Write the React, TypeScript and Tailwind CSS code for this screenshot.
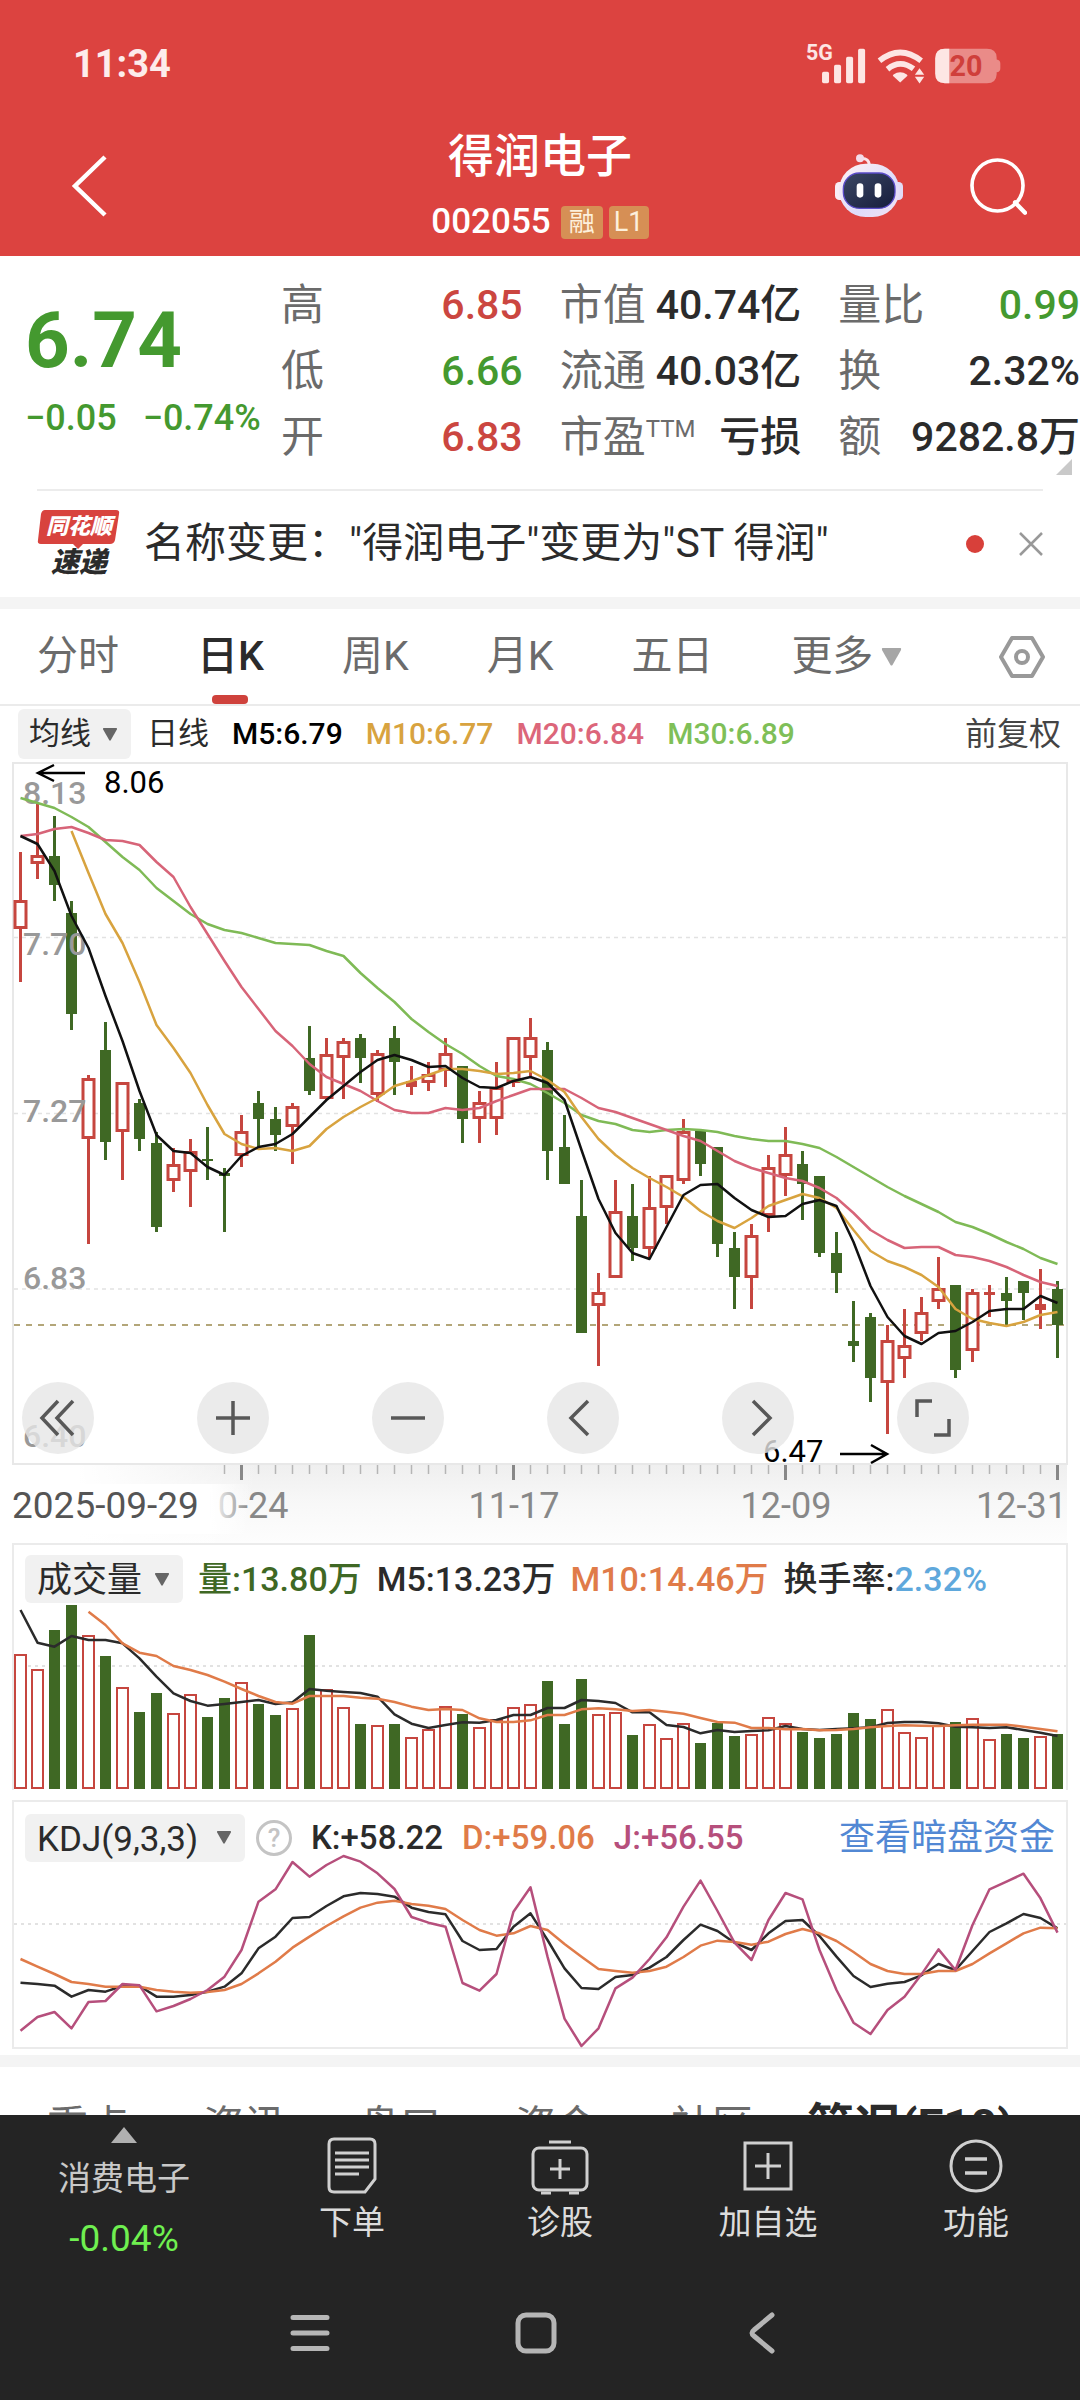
import React from "react";

type Candle = [up: number, high: number, low: number, top: number, bottom: number];

const STEP = 17;
const FIRST_X = 20.5;
const xAt = (i: number) => FIRST_X + i * STEP;

// up: 1 = hollow red, 0 = solid green, 2 = thin red body
const candles: Candle[] = [
  [1, 852, 982, 900, 929], [1, 802, 879, 855, 864], [0, 816, 901, 856, 885], [0, 901, 1030, 913, 1014],
  [1, 1075, 1244, 1078, 1139], [0, 1022, 1160, 1050, 1142], [1, 1082, 1180, 1082, 1132], [0, 1099, 1151, 1103, 1139],
  [0, 1132, 1232, 1143, 1227], [1, 1148, 1192, 1164, 1181], [1, 1139, 1207, 1151, 1172], [0, 1127, 1180, 1159, 1161],
  [0, 1168, 1232, 1173, 1176], [1, 1115, 1167, 1131, 1156], [0, 1091, 1147, 1103, 1119], [0, 1107, 1151, 1119, 1135],
  [1, 1103, 1164, 1106, 1127], [0, 1026, 1095, 1058, 1091], [1, 1038, 1100, 1054, 1099], [1, 1038, 1099, 1041, 1058],
  [0, 1034, 1083, 1038, 1058], [1, 1050, 1102, 1053, 1095], [0, 1026, 1095, 1038, 1062], [2, 1066, 1095, 1081, 1087],
  [1, 1062, 1091, 1074, 1083], [1, 1038, 1087, 1053, 1071], [0, 1066, 1143, 1066, 1119], [1, 1091, 1143, 1102, 1119],
  [1, 1062, 1135, 1087, 1119], [1, 1037, 1087, 1037, 1083], [1, 1018, 1078, 1037, 1058], [0, 1042, 1180, 1050, 1151],
  [0, 1115, 1184, 1147, 1184], [0, 1180, 1333, 1216, 1333], [1, 1273, 1366, 1292, 1306], [1, 1180, 1278, 1211, 1278],
  [0, 1184, 1261, 1216, 1248], [1, 1176, 1258, 1207, 1249], [1, 1175, 1224, 1175, 1208], [1, 1119, 1184, 1131, 1181],
  [0, 1131, 1176, 1131, 1164], [0, 1147, 1257, 1147, 1244], [0, 1232, 1309, 1248, 1277], [1, 1224, 1309, 1235, 1278],
  [1, 1155, 1232, 1167, 1216], [1, 1127, 1196, 1154, 1176], [0, 1151, 1220, 1164, 1184], [0, 1176, 1257, 1176, 1253],
  [0, 1232, 1293, 1253, 1273], [0, 1301, 1362, 1341, 1346], [0, 1313, 1402, 1317, 1378], [1, 1325, 1434, 1340, 1383],
  [1, 1309, 1378, 1345, 1359], [1, 1297, 1341, 1312, 1334], [1, 1257, 1309, 1288, 1302], [0, 1285, 1378, 1285, 1370],
  [1, 1289, 1362, 1292, 1351], [2, 1285, 1317, 1292, 1295], [0, 1277, 1325, 1293, 1301], [0, 1281, 1320, 1281, 1293],
  [2, 1269, 1329, 1304, 1310], [0, 1281, 1358, 1289, 1325],
];

const ma5 = [836, 844, 871, 916, 948, 996, 1041, 1091, 1135, 1151, 1153, 1167, 1175, 1156, 1147, 1144, 1134, 1117, 1100, 1086, 1072, 1060, 1055, 1060, 1067, 1066, 1078, 1087, 1088, 1081, 1077, 1083, 1100, 1150, 1199, 1233, 1253, 1259, 1227, 1195, 1185, 1184, 1198, 1210, 1217, 1216, 1204, 1200, 1206, 1242, 1286, 1317, 1336, 1344, 1333, 1331, 1322, 1311, 1309, 1309, 1296, 1303];
const ma10 = [831, 873, 914, 943, 982, 1025, 1048, 1073, 1105, 1134, 1144, 1149, 1148, 1151, 1146, 1129, 1117, 1107, 1098, 1086, 1081, 1075, 1069, 1069, 1071, 1074, 1073, 1071, 1080, 1092, 1117, 1139, 1155, 1168, 1178, 1187, 1197, 1211, 1221, 1228, 1218, 1206, 1200, 1194, 1198, 1208, 1230, 1251, 1261, 1267, 1275, 1287, 1309, 1319, 1323, 1326, 1322, 1315, 1312];
const ma20 = [836, 834, 829, 827, 833, 840, 841, 845, 862, 877, 907, 934, 961, 987, 1009, 1031, 1046, 1064, 1077, 1084, 1091, 1101, 1110, 1113, 1113, 1108, 1110, 1108, 1101, 1095, 1089, 1089, 1089, 1098, 1108, 1112, 1118, 1124, 1130, 1136, 1141, 1151, 1161, 1168, 1173, 1178, 1181, 1188, 1198, 1213, 1230, 1240, 1248, 1247, 1247, 1255, 1257, 1261, 1267, 1275, 1282, 1286];
const ma30 = [798, 803, 808, 817, 827, 842, 857, 870, 888, 901, 914, 924, 930, 933, 938, 943, 944, 945, 951, 956, 973, 988, 1002, 1019, 1032, 1044, 1054, 1066, 1076, 1079, 1084, 1093, 1103, 1115, 1121, 1124, 1130, 1132, 1130, 1129, 1130, 1132, 1136, 1139, 1141, 1141, 1144, 1148, 1157, 1167, 1177, 1187, 1196, 1204, 1212, 1222, 1227, 1234, 1242, 1249, 1258, 1264];

const volumes = [1655, 1670, 1630, 1605, 1636, 1656, 1688, 1712, 1693, 1714, 1695, 1717, 1698, 1683, 1704, 1715, 1709, 1635, 1690, 1708, 1724, 1726, 1724, 1738, 1730, 1707, 1714, 1728, 1720, 1708, 1705, 1681, 1724, 1679, 1715, 1713, 1735, 1725, 1739, 1724, 1743, 1723, 1736, 1735, 1718, 1724, 1732, 1738, 1734, 1713, 1719, 1710, 1733, 1738, 1726, 1722, 1719, 1740, 1734, 1738, 1737, 1734];
const vol5 = [210, 308, 320, 288, 300, 300, 310, 355, 410, 460, 483, 497, 492, 486, 480, 492, 487, 447, 452, 456, 459, 470, 523, 551, 564, 555, 547, 548, 540, 525, 525, 504, 504, 480, 483, 489, 517, 517, 555, 561, 580, 570, 576, 573, 571, 558, 567, 570, 567, 565, 562, 549, 546, 546, 550, 560, 562, 564, 562, 570, 578, 588];
const vol10 = [215, 255, 310, 338, 348, 378, 390, 405, 425, 447, 468, 486, 491, 468, 468, 468, 473, 476, 486, 500, 510, 507, 510, 535, 546, 546, 541, 525, 525, 508, 505, 508, 513, 510, 515, 521, 534, 546, 548, 564, 564, 568, 567, 571, 570, 567, 562, 558, 556, 557, 558, 556, 554, 554, 554, 560, 567, 574];

const kLine = [578, 582, 587, 620, 600, 605, 588, 588, 620, 620, 615, 605, 590, 550, 475, 440, 384, 381, 348, 319, 309, 312, 320, 353, 366, 373, 453, 480, 477, 410, 370, 450, 535, 594, 597, 561, 555, 533, 501, 450, 404, 423, 458, 480, 430, 393, 390, 438, 500, 558, 591, 581, 576, 556, 522, 540, 483, 426, 400, 372, 384, 415];
const dLine = [507, 530, 552, 576, 582, 590, 590, 590, 600, 605, 608, 606, 600, 582, 550, 515, 473, 440, 408, 379, 353, 338, 332, 342, 347, 357, 390, 420, 437, 430, 408, 420, 462, 500, 537, 543, 548, 543, 530, 501, 467, 452, 456, 464, 455, 432, 417, 430, 453, 486, 522, 543, 552, 552, 543, 543, 522, 490, 460, 430, 413, 415];
const jLine = [722, 681, 666, 715, 636, 633, 582, 586, 664, 648, 627, 600, 560, 480, 335, 298, 216, 260, 225, 198, 215, 250, 297, 381, 398, 410, 579, 602, 552, 365, 292, 500, 686, 768, 715, 595, 563, 507, 442, 350, 272, 363, 458, 510, 390, 309, 328, 480, 600, 698, 732, 660, 620, 553, 478, 540, 405, 298, 275, 251, 325, 428];

const volY = (v: number) => 1540 + v / 3;
const kdjY = (v: number) => 1790 + v / 3;

const RED = "#c6463f";
const GREEN = "#3f6824";

function Line({ data, color, start = 0, y = (v: number) => v, width = 2.5 }: { data: number[]; color: string; start?: number; y?: (v: number) => number; width?: number }) {
  return (
    <polyline
      points={data.map((v, i) => `${xAt(i + start)},${y(v)}`).join(" ")}
      fill="none"
      stroke={color}
      strokeWidth={width}
      strokeLinejoin="round"
    />
  );
}

function StatusIcons() {
  return (
    <svg viewBox="78 28 584 128" className="h-[43px] w-[195px]" role="img" aria-label="5G 信号, Wi-Fi, 电量 20%">
      <text x="78" y="81" fontSize="64" fontWeight="700" fill="#fde6e4" className="font-['Roboto']">5G</text>
      <g fill="#fde6e4">
        <rect x="126" y="117" width="21" height="34" rx="5" />
        <rect x="162" y="96" width="21" height="55" rx="5" />
        <rect x="198" y="72" width="21" height="79" rx="5" />
        <rect x="234" y="48" width="21" height="103" rx="5" />
        <path d="M340 125 Q360 112 380 125 L382 129 L360 149 L338 129 Z" />
        <path d="M418 106 l14 20 h-28 Z M418 152 l14 -20 h-28 Z" />
      </g>
      <g fill="none" stroke="#fde6e4" strokeWidth="17">
        <path d="M298 84 Q360 34 423 84" />
        <path d="M322 109 Q360 78 400 108" />
      </g>
      <path d="M494 48 H620 Q648 48 649 74 V80 Q660 82 660 92 V106 Q660 117 649 118 V124 Q648 151 620 151 H494 Q465 151 465 122 V77 Q465 48 494 48Z" fill="#ea8b88" />
      <path d="M507 48 H494 Q465 48 465 77 V122 Q465 151 494 151 H507 Z" fill="#fde6e4" />
      <text x="508" y="129" fontSize="86" fontWeight="700" fill="#cf3f3b" className="font-['Roboto']">20</text>
    </svg>
  );
}

function Robot() {
  return (
    <svg viewBox="165 370 210 198" className="h-[66px] w-[70px]" aria-hidden="true">
      <defs>
        <linearGradient id="shell" x1="0" y1="0" x2="1" y2="1">
          <stop offset="0" stopColor="#fff3f3" />
          <stop offset="0.6" stopColor="#dfdcfa" />
          <stop offset="1" stopColor="#f2e2f2" />
        </linearGradient>
        <linearGradient id="visor" x1="0" y1="0" x2="1" y2="1">
          <stop offset="0" stopColor="#3b4763" />
          <stop offset="1" stopColor="#161c3c" />
        </linearGradient>
      </defs>
      <path d="M245 387 Q270 384 271 408" fill="none" stroke="#fbe3ea" strokeWidth="9" />
      <circle cx="243" cy="386" r="12" fill="#f3dcea" />
      <rect x="168" y="457" width="30" height="54" rx="13" fill="#f8eef6" />
      <rect x="342" y="457" width="30" height="54" rx="13" fill="#e2dcf6" />
      <rect x="180" y="402" width="181" height="160" rx="80" fill="url(#shell)" />
      <rect x="193" y="430" width="155" height="106" rx="48" fill="url(#visor)" stroke="#5a4bc8" strokeWidth="4" />
      <rect x="233" y="461" width="20" height="43" rx="10" fill="#fff" />
      <rect x="287" y="461" width="20" height="43" rx="10" fill="#fff" />
    </svg>
  );
}

function Header() {
  return (
    <header className="bg-[#dc4340] text-white">
      <div className="flex h-[126px] items-center justify-between pl-[73px] pr-[79px]">
        <time className="pt-0.5 text-[38px] font-bold text-[#fdeceb]">11:34</time>
        <StatusIcons />
      </div>
      <div className="grid h-[130px] grid-cols-[1fr_auto_1fr] items-start">
        <button aria-label="返回" className="ml-[69px] mt-[29px] w-10">
          <svg viewBox="0 0 40 62" className="h-[62px] w-10" fill="none" stroke="#fff" strokeWidth="4.5">
            <path d="M36 2 L6 31 L36 60" />
          </svg>
        </button>
        <div className="flex flex-col items-center">
          <h1 className="text-[46px] font-medium leading-[60px]">得润电子</h1>
          <div className="flex h-[70px] items-center gap-1.5 pt-0.5 text-[35px] font-medium">
            <span>002055</span>
            <span className="ml-1 flex h-[33px] w-[42px] items-center justify-center rounded-sm bg-[#d68f55] text-[26px] font-normal text-[#fdf0dc]">融</span>
            <span className="flex h-[33px] w-10 items-center justify-center rounded-sm bg-[#d68f55] text-[27px] font-normal text-[#fdf0dc]">L1</span>
          </div>
        </div>
        <div className="flex items-center justify-end gap-[66px] pr-[53px] pt-[27px]">
          <button aria-label="智能助手"><Robot /></button>
          <button aria-label="搜索">
            <svg viewBox="570 388 172 172" className="h-[57px] w-[57px]" fill="none" stroke="#fff" strokeWidth="11">
              <circle cx="653" cy="471" r="77" />
              <path d="M706 522 L736 553" strokeWidth="13" strokeLinecap="round" />
            </svg>
          </button>
        </div>
      </div>
    </header>
  );
}

const quoteColumns = [
  [
    { label: "高", value: "6.85", tone: "text-[#cb4640]" },
    { label: "低", value: "6.66", tone: "text-[#44992f]" },
    { label: "开", value: "6.83", tone: "text-[#cb4640]" },
  ],
  [
    { label: "市值", value: "40.74亿", tone: "text-[#2b2b2b]" },
    { label: "流通", value: "40.03亿", tone: "text-[#2b2b2b]" },
    { label: "市盈", sup: "TTM", value: "亏损", tone: "text-[#2b2b2b]" },
  ],
  [
    { label: "量比", value: "0.99", tone: "text-[#44992f]" },
    { label: "换", value: "2.32%", tone: "text-[#2b2b2b]" },
    { label: "额", value: "9282.8万", tone: "text-[#2b2b2b]" },
  ],
] as { label: string; sup?: string; value: string; tone: string }[][];

function Quote() {
  return (
    <section className="relative flex pb-[19px] pt-4">
      <div className="w-[281px] shrink-0 whitespace-nowrap pl-[25px] text-[#44992f]">
        <div className="pt-[25px] text-[78px] font-bold leading-[88px]">6.74</div>
        <div className="flex gap-[26px] pt-[7px] text-[36px] font-medium leading-[52px]">
          <span>−0.05</span>
          <span>−0.74%</span>
        </div>
      </div>
      <div className="grid flex-1 grid-cols-3 gap-x-[37px]">
        {quoteColumns.map((col, i) => (
          <dl key={i}>
            {col.map((q) => (
              <div key={q.label} className="flex h-[66px] items-center justify-between whitespace-nowrap">
                <dt className="flex text-[43px] leading-[66px] text-[#6b6b6b]">
                  {q.label}
                  {q.sup && <sup className="top-0 pt-3 text-[24px] leading-[26px]">{q.sup}</sup>}
                </dt>
                <dd className={`text-[41px] font-medium leading-[66px] ${q.tone}`}>{q.value}</dd>
              </div>
            ))}
          </dl>
        ))}
      </div>
      <svg viewBox="0 0 16 16" className="absolute bottom-3.5 right-2 h-4 w-4" aria-hidden="true">
        <path d="M16 0 V16 H0 Z" fill="#c9c9c9" />
      </svg>
    </section>
  );
}

function Notice() {
  return (
    <section className="mx-[37px] flex h-[108px] items-center border-t-2 border-[#ececec]">
      <div className="relative h-[70px] w-[84px] shrink-0 text-center font-black italic">
        <svg viewBox="0 0 84 42" className="absolute left-0 top-0 h-[42px] w-[84px]" aria-hidden="true">
          <path d="M8 1 H79 Q83 1 82 5 L78 31 Q77 35 73 35 H46 L41 40 L36 35 H4 Q0 35 1 31 L4 5 Q5 1 8 1Z" fill="#d8433e" />
        </svg>
        <div className="relative text-[22px] leading-[36px] text-white">同花顺</div>
        <div className="relative text-[28px] leading-[36px] text-[#2b2b2b]">速递</div>
      </div>
      <a href="#notice" className="ml-[23px] flex-1 whitespace-nowrap text-[41px] text-[#2b2b2b]">名称变更："得润电子"变更为"ST 得润"</a>
      <span className="mr-[35px] h-[18px] w-[18px] rounded-full bg-[#d8403a]" />
      <button aria-label="关闭">
        <svg viewBox="0 0 24 24" className="h-6 w-6" stroke="#999" strokeWidth="2.5">
          <path d="M1 1 L23 23 M23 1 L1 23" />
        </svg>
      </button>
    </section>
  );
}

function Down({ className }: { className: string }) {
  return (
    <svg viewBox="0 0 20 18" className={className} aria-hidden="true">
      <path d="M1 0 H19 Q20 0 19.500 2 L11 17 Q10 18 9 17 L0.500 2 Q0 0 1 0Z" fill="currentColor" />
    </svg>
  );
}

function Tabs() {
  const tabs = ["分时", "日K", "周K", "月K", "五日"];
  return (
    <nav className="flex h-[97px] items-center border-b-2 border-[#ebebeb] pl-[37px] pr-[35px] text-[41px] text-[#6b6b6b]">
      <div role="tablist" className="flex h-full gap-[78px]">
        {tabs.map((t) => (
          <button key={t} role="tab" aria-selected={t === "日K"} className={t === "日K" ? "relative font-medium text-[#2b2b2b]" : ""}>
            {t}
            {t === "日K" && <span className="absolute bottom-0 left-1/2 h-[9px] w-9 -translate-x-1/2 rounded-sm bg-[#cf423c]" />}
          </button>
        ))}
        <button className="flex items-center gap-2">
          更多
          <Down className="h-[18px] w-[21px] text-[#a6a6a6]" />
        </button>
      </div>
      <button aria-label="设置" className="ml-auto">
        <svg viewBox="0 0 46 44" className="h-11 w-[46px]" fill="none" stroke="#999" strokeWidth="4">
          <path d="M13 3 H33 L44 22 L33 41 H13 L2 22 Z" strokeLinejoin="round" />
          <circle cx="23" cy="22" r="6" />
        </svg>
      </button>
    </nav>
  );
}

function Picker({ label, value, className }: { label: string; value: string; className: string }) {
  return (
    <label className="relative inline-flex items-center">
      <select aria-label={label} className={`appearance-none rounded-md bg-[#f1f1f1] font-normal text-[#2b2b2b] ${className}`}>
        <option>{value}</option>
      </select>
      <Down className="pointer-events-none absolute right-3 h-[13px] w-[18px] text-[#666]" />
    </label>
  );
}

function PriceChart() {
  const dates = [
    { i: 13, text: "10-24", anchor: "middle" as const, x: 243 },
    { i: 29, text: "11-17", anchor: "middle" as const, x: 514 },
    { i: 45, text: "12-09", anchor: "middle" as const, x: 786 },
    { i: 61, text: "12-31", anchor: "end" as const, x: 1067 },
  ];
  const levels: [string, number][] = [["8.13", 804], ["7.70", 955], ["7.27", 1122], ["6.83", 1289], ["6.40", 1447]];
  const ctl = "flex h-[72px] w-[72px] items-center justify-center rounded-full bg-[#e6e6e6]/80";
  const ico = { viewBox: "0 0 40 40", className: "h-10 w-10", fill: "none", stroke: "#585858", strokeWidth: 3.5 };
  return (
    <div className="relative">
      <svg viewBox="0 760 1080 783" className="block w-full font-['Roboto','Noto_Sans_CJK_SC',sans-serif]" role="img" aria-label="日K线图">
        <defs>
          <linearGradient id="axis" x1="0" y1="0" x2="0" y2="1">
            <stop offset="0" stopColor="#efefef" />
            <stop offset="0.500" stopColor="#f8f8f8" />
            <stop offset="1" stopColor="#fdfdfd" />
          </linearGradient>
          <linearGradient id="fade" x1="0" y1="0" x2="1" y2="0">
            <stop offset="0" stopColor="#fff" />
            <stop offset="0.840" stopColor="#fff" />
            <stop offset="1" stopColor="#fff" stopOpacity="0" />
          </linearGradient>
          <linearGradient id="axisFade" x1="0" y1="0" x2="1" y2="0">
            <stop offset="0.300" stopColor="#fff" />
            <stop offset="1" stopColor="#fff" stopOpacity="0" />
          </linearGradient>
        </defs>
        <rect x="13" y="1465" width="1054" height="78" fill="url(#axis)" />
        <rect x="0" y="1465" width="260" height="78" fill="url(#axisFade)" />
        <rect x="13" y="763" width="1054" height="701" fill="#fff" stroke="#e8e8e8" strokeWidth="2" />
        <g stroke="#e2e2e2" strokeWidth="1.5" strokeDasharray="4 4">
          <path d="M14 937.500 H1066 M14 1113.500 H1066 M14 1289 H1066" />
        </g>
        <path d="M14 1325 H1066" stroke="#b3a679" strokeWidth="2" strokeDasharray="6 6" />
        {candles.map(([up, high, low, top, bottom], i) => {
          const x = xAt(i);
          const color = up ? RED : GREEN;
          return (
            <g key={i} stroke={color}>
              <path d={`M${x} ${high} V${low}`} strokeWidth="3" />
              {up === 1 ? (
                <rect x={x - 5.5} y={top + 1.5} width="11" height={Math.max(bottom - top - 3, 3)} fill="#fff" strokeWidth="3" />
              ) : (
                <rect x={x - 5.5} y={top} width="11" height={Math.max(bottom - top, 2)} fill={color} stroke="none" />
              )}
            </g>
          );
        })}
        <g fontSize="32" fontWeight="500" fill="#999">
          {levels.map(([t, y]) => (
            <text key={t} x="23" y={y}>{t}</text>
          ))}
        </g>
        <Line data={ma30} color="#7fba56" />
        <Line data={ma20} color="#d76478" />
        <Line data={ma10} color="#d8a33f" start={3} />
        <Line data={ma5} color="#111" />
        <g fill="none" stroke="#000" strokeWidth="2.5">
          <path d="M85 773 H38 M54 765 L38 773 L54 781" />
          <path d="M840 1454 H887 M871 1445 L887 1454 L871 1463" />
        </g>
        <g fontSize="31" fill="#000">
          <text x="104" y="793">8.06</text>
          <text x="763" y="1462">6.47</text>
        </g>
        {candles.map((_, i) => i >= 12 && (i - 13) % 16 !== 0 && (
          <path key={i} d={`M${xAt(i)} 1465 V1474`} stroke="#b5b5b5" strokeWidth="1.5" />
        ))}
        <g fontSize="36" fill="#888">
          {dates.map((d) => (
            <React.Fragment key={d.text}>
              <path d={`M${xAt(d.i)} 1465 V1480`} stroke="#888" strokeWidth="3" />
              <text x={d.x} y="1518" textAnchor={d.anchor}>{d.text}</text>
            </React.Fragment>
          ))}
        </g>
        <rect x="0" y="1484" width="250" height="50" fill="url(#fade)" />
        <text x="12" y="1518" fontSize="37" fill="#555">2025-09-29</text>
      </svg>
      <div className="absolute inset-x-0 bottom-[89px] flex gap-[103px] pl-[22px]">
        <button aria-label="最早" className={ctl}><svg {...ico}><path d="M20 3 L4 20 L20 37 M35 3 L19 20 L35 37" /></svg></button>
        <button aria-label="放大" className={ctl}><svg {...ico}><path d="M20 3 V37 M3 20 H37" /></svg></button>
        <button aria-label="缩小" className={ctl}><svg {...ico}><path d="M3 20 H37" /></svg></button>
        <button aria-label="向前" className={ctl}><svg {...ico}><path d="M25 3 L8 20 L25 37" /></svg></button>
        <button aria-label="向后" className={ctl}><svg {...ico}><path d="M15 3 L32 20 L15 37" /></svg></button>
        <button aria-label="全屏" className={ctl}><svg {...ico}><path d="M4 19 V3 H19 M21 37 H36 V21" /></svg></button>
      </div>
    </div>
  );
}

function Volume() {
  return (
    <section className="mx-3 border-x-2 border-t-2 border-[#ebebeb]">
      <div className="flex h-[58px] items-center gap-[15px] whitespace-nowrap pl-[11px] pt-2.5 text-[34px] font-medium text-[#2b2b2b]">
        <Picker label="指标" value="成交量" className="h-12 pl-3 pr-10 text-[35px]" />
        <span className="text-[#3f6824]">量:13.80万</span>
        <span>M5:13.23万</span>
        <span className="text-[#e07b49]">M10:14.46万</span>
        <span>换手率:<span className="text-[#5fa8dc]">2.32%</span></span>
      </div>
      <svg viewBox="14 1603 1052 187" className="block w-full" role="img" aria-label="成交量">
        <path d="M14 1666 H1066" stroke="#e2e2e2" strokeWidth="2" strokeDasharray="3 4" />
        {volumes.map((y, i) => {
          const x = xAt(i);
          return candles[i][0] ? (
            <rect key={i} x={x - 5.5} y={y} width="11" height={1788 - y} fill="#fff" stroke={RED} strokeWidth="2" />
          ) : (
            <rect key={i} x={x - 5.5} y={y} width="11" height={1789 - y} fill={GREEN} />
          );
        })}
        <Line data={vol5} color="#2b2b2b" y={volY} />
        <Line data={vol10} color="#e07b49" y={volY} start={4} />
      </svg>
    </section>
  );
}

function Kdj() {
  return (
    <section className="mx-3 mt-2.5 border-2 border-[#ebebeb]">
      <div className="flex h-[59px] items-center gap-[19px] whitespace-nowrap pl-[11px] pr-[11px] pt-3 text-[33px] font-medium text-[#2b2b2b]">
        <Picker label="指标" value="KDJ(9,3,3)" className="h-12 pl-3 pr-[46px] text-[35px]" />
        <button aria-label="说明" className="-ml-2 flex h-9 w-9 items-center justify-center rounded-full border-3 border-[#c4c4c4] text-[26px] leading-none text-[#c4c4c4]">?</button>
        <span>K:+58.22</span>
        <span className="text-[#e07b49]">D:+59.06</span>
        <span className="text-[#b64f7c]">J:+56.55</span>
        <a href="#funds" className="ml-auto text-[36px] font-normal text-[#5288d4]">查看暗盘资金</a>
      </div>
      <svg viewBox="14 1861 1052 186" className="block w-full overflow-visible" role="img" aria-label="KDJ">
        <path d="M14 1924 H1066" stroke="#e2e2e2" strokeWidth="2" strokeDasharray="3 4" />
        <Line data={kLine} color="#2b2b2b" y={kdjY} />
        <Line data={dLine} color="#e07b49" y={kdjY} />
        <Line data={jLine} color="#b64f7c" y={kdjY} />
      </svg>
    </section>
  );
}

const actions: { label: string; icon: React.ReactNode }[] = [
  {
    label: "下单",
    icon: (
      <>
        <path d="M10 4 H46 Q51 4 51 9 V44 L41 57 H10 Q5 57 5 52 V9 Q5 4 10 4Z" />
        <path d="M11 18 H45 M11 25 H45 M11 32 H45 M11 39 H35" strokeWidth="3" />
      </>
    ),
  },
  {
    label: "诊股",
    icon: (
      <>
        <rect x="1" y="13" width="54" height="42" rx="6" />
        <path d="M17 7 H39 M28 24 V44 M18 34 H38 M9 58 H19 M37 58 H47" />
      </>
    ),
  },
  {
    label: "加自选",
    icon: (
      <>
        <rect x="5" y="8" width="46" height="46" />
        <path d="M28 18 V44 M15 31 H41" />
      </>
    ),
  },
  {
    label: "功能",
    icon: (
      <>
        <circle cx="28" cy="31" r="25" />
        <path d="M17 24 H39 M17 38 H39" strokeWidth="3.5" />
      </>
    ),
  },
];

function BottomBar() {
  return (
    <footer className="bg-[#242424] text-[#c9c9c9]">
      <nav className="grid h-[150px] grid-cols-[248fr_208fr_208fr_208fr_208fr]">
        <button className="flex flex-col items-center pt-3 leading-none">
          <svg viewBox="0 0 26 16" className="h-4 w-[26px]" aria-hidden="true"><path d="M13 0 L26 16 H0 Z" fill="#b0b0b0" /></svg>
          <span className="pt-3.5 text-[33px] leading-[44px]">消费电子</span>
          <span className="pt-3.5 text-[37px] leading-[48px] text-[#6ff050]">-0.04%</span>
        </button>
        {actions.map((a) => (
          <button key={a.label} className="flex flex-col items-center pt-5">
            <svg viewBox="0 0 56 60" className="h-[60px] w-14 overflow-visible" fill="none" stroke="#d0d0d0" strokeWidth="3" aria-hidden="true">{a.icon}</svg>
            <span className="pt-1.5 text-[33px] leading-[44px] text-[#dcdcdc]">{a.label}</span>
          </button>
        ))}
      </nav>
      <div className="grid h-[135px] grid-cols-[402fr_268fr_410fr] text-[#b5b5b5]">
        <button aria-label="最近任务" className="flex justify-end pr-[72px] pt-[49px]">
          <svg viewBox="0 0 40 40" className="h-10 w-10" stroke="currentColor" strokeWidth="5" strokeLinecap="round"><path d="M3 3.500 H37 M3 19 H37 M3 34.500 H37" /></svg>
        </button>
        <button aria-label="主屏幕" className="flex justify-center pt-[47px]">
          <svg viewBox="0 0 42 42" className="h-[42px] w-[42px]" fill="none" stroke="currentColor" strokeWidth="5"><rect x="3" y="3" width="36" height="36" rx="8" /></svg>
        </button>
        <button aria-label="返回" className="flex pl-[77px] pt-[47px]">
          <svg viewBox="0 0 28 42" className="h-[42px] w-7" fill="none" stroke="currentColor" strokeWidth="5" strokeLinecap="round" strokeLinejoin="round"><path d="M25 3 L7 18 Q3 21 7 24 L25 39" /></svg>
        </button>
      </div>
    </footer>
  );
}

export default function App() {
  return (
    <div className="w-full bg-white font-['Roboto','Noto_Sans_CJK_SC',sans-serif]">
      <Header />
      <main>
        <Quote />
        <Notice />
        <div className="h-3 bg-[#f4f4f4]" />
        <Tabs />
        <div className="flex h-[54px] items-center whitespace-nowrap pl-[18px] pr-[19px] pt-0.5 text-[30px] font-medium text-[#2b2b2b]">
          <Picker label="主图指标" value="均线" className="h-[50px] pl-[11px] pr-10 text-[31px]" />
          <div className="ml-4 flex gap-[23px]">
            <span className="text-[31px] font-normal">日线</span>
            <span className="text-black">M5:6.79</span>
            <span className="text-[#d8a33f]">M10:6.77</span>
            <span className="text-[#dc667a]">M20:6.84</span>
            <span className="text-[#7fbf58]">M30:6.89</span>
          </div>
          <button className="ml-auto text-[32px] font-normal text-[#444]">前复权</button>
        </div>
        <PriceChart />
        <Volume />
        <Kdj />
        <div className="mt-[6px] h-3 bg-[#f4f4f4]" />
        <nav className="flex h-12 gap-[74px] overflow-hidden whitespace-nowrap pl-[47px] pt-[29px] text-[41px] leading-[60px] text-[#6b6b6b]">
          <a href="#a">重点</a>
          <a href="#b">资讯</a>
          <a href="#c">盘口</a>
          <a href="#d">资金</a>
          <a href="#e">社区</a>
          <a href="#f" className="-ml-5 text-[47px] font-bold text-[#2b2b2b]">简况(F10)</a>
        </nav>
      </main>
      <BottomBar />
    </div>
  );
}
